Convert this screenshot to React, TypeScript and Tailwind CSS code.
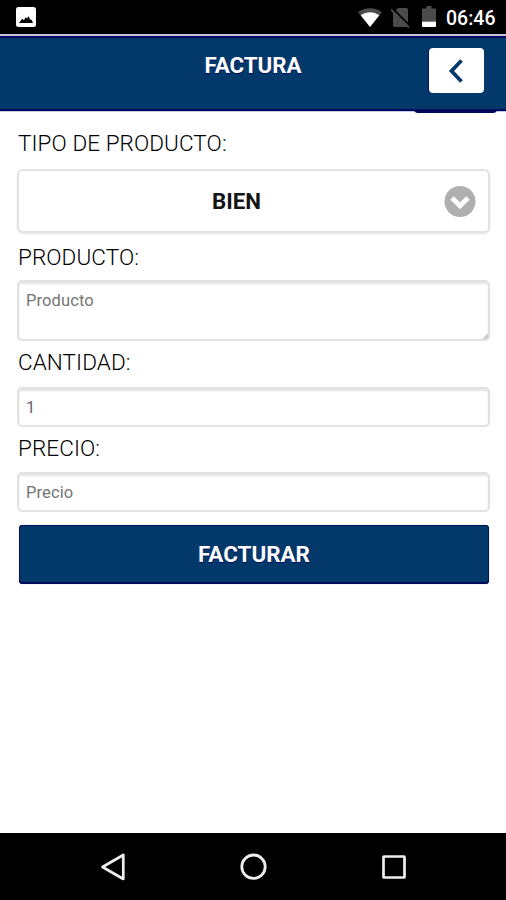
import React, { useState } from "react";

function StatusBar() {
  return (
    <div className="flex h-[34px] shrink-0 items-start justify-between bg-black pl-4 pr-[10px]">
      <svg className="mt-[7px] h-5 w-5" viewBox="0 0 20 20">
        <rect width="20" height="20" rx="2.5" fill="#fff" />
        <path d="M3 16l3.200-4.300 1.800 1.500 1.600-3 1.400 1.200 1.500-2.200 1.700 3.300 1.300.2 1.500 3.300z" fill="#000" />
      </svg>
      <div className="flex flex-row items-start">
        <svg className="mr-[9px] mt-[8px] h-[19px] w-6" viewBox="0 0 24 19">
          <path d="M0 4.2C7-1.2 17-1.2 24 4.2L12 19z" fill="#4b4b4b" />
          <path d="M2.700 7.3c5.800-4.200 12.800-4.200 18.600 0L12 19z" fill="#fff" />
        </svg>
        <svg className="mr-[11px] mt-[8px] h-[20px] w-[20px]" viewBox="0 0 20 20">
          <path d="M7 0h8.5a1.500 1.500 0 0 1 1.500 1.500V17.500a1.500 1.500 0 0 1-1.500 1.500H3.500A1.500 1.500 0 0 1 2 17.500V5z" fill="#4b4b4b" />
          <path d="M1.500 0.500L19 18" stroke="#000" strokeWidth="2" />
          <path d="M0 1.500L18 19.500" stroke="#4b4b4b" strokeWidth="2" />
        </svg>
        <svg className="mr-[10px] mt-[6px] h-[21px] w-[14px]" viewBox="0 0 14 21">
          <path d="M4.500 0h5v2.500H14V15H0V2.500h4.500z" fill="#4b4b4b" />
          <path d="M0 15.500h14v4.500a1 1 0 0 1-1 1H1a1 1 0 0 1-1-1z" fill="#fff" />
        </svg>
        <span className="mt-[7px] w-[50px] whitespace-nowrap text-[19.5px] font-medium leading-6 text-white">
          06:46
        </span>
      </div>
    </div>
  );
}

function Header() {
  return (
    <header className="relative flex h-[78px] shrink-0 justify-center border-b border-t-2 border-b-[#c3c4e6] border-t-[#c9bfd6] bg-[#03386b] shadow-[inset_0_2px_0_#000a5c,inset_0_-2px_0_#000a5c]">
      <h1 className="mt-[17px] text-[22.3px] font-bold leading-6 text-white [text-shadow:0_1px_0_#000a5c]">
        FACTURA
      </h1>
      <button
        aria-label="Volver"
        className="absolute right-[22px] top-[12px] flex h-[45px] w-[55px] items-center justify-center rounded-[4px] bg-white shadow-[-1px_0_0_#00145c]"
      >
        <svg className="mr-[2px] h-6 w-4" viewBox="0 0 16 24" fill="none">
          <path d="M13.500 1.500L3.500 12l10 10.500" stroke="#03386b" strokeWidth="3.800" />
        </svg>
      </button>
      <div className="absolute right-[9px] top-[73px] h-[4px] w-[83px] rounded-b-sm bg-[#000a5c]" />
    </header>
  );
}

function Label({ children }: { children: React.ReactNode }) {
  return (
    <div className="pb-[2px] pl-px text-[22.5px] font-light leading-6 tracking-[0.08px] text-black">
      {children}
    </div>
  );
}

const fieldClass =
  "block w-full resize-none rounded-[5px] border-2 border-[#e2e2e2] bg-white px-[7px] text-[16.5px] tracking-[0.1px] text-[#666] shadow-[inset_0_2px_2px_#e4e4e4] outline-none placeholder:text-[#757575]";

function NavBar() {
  return (
    <div className="flex h-[67px] shrink-0 items-center justify-between bg-black pl-[100px] pr-[100px]">
      <svg className="h-7 w-[25px]" viewBox="0 0 25 28" fill="none">
        <path d="M23.300 2v24L2.500 14z" stroke="#eee" strokeWidth="2.700" strokeLinejoin="round" />
      </svg>
      <svg className="h-7 w-7" viewBox="0 0 28 28" fill="none">
        <circle cx="13.500" cy="13.700" r="11.700" stroke="#eee" strokeWidth="2.800" />
      </svg>
      <svg className="h-6 w-6" viewBox="0 0 24 24" fill="none">
        <rect x="1.500" y="1.500" width="21" height="21" rx="0.500" stroke="#eee" strokeWidth="2.700" />
      </svg>
    </div>
  );
}

export default function App() {
  const [producto, setProducto] = useState("");
  const [cantidad, setCantidad] = useState("1");
  const [precio, setPrecio] = useState("");

  return (
    <div className="flex h-[900px] w-[506px] flex-col overflow-hidden bg-white font-['Roboto',sans-serif]">
      <StatusBar />
      <Header />
      <main className="flex flex-1 flex-col pl-[17px] pr-4 pt-[19px]">
        <Label>TIPO DE PRODUCTO:</Label>
        <button className="mt-[12px] flex h-16 w-full items-center justify-center rounded-[6px] border-2 border-[#e2e2e2] bg-white pl-2 pr-3 text-[22.3px] font-bold text-[#151515] shadow-[0_1px_2px_#e4e4e4]">
          <span className="flex-1 pl-[2px] pt-[2px] text-center">BIEN</span>
          <svg className="h-8 w-8" viewBox="0 0 32 32" fill="none">
            <circle cx="16" cy="16.500" r="15.500" fill="#afafaf" />
            <path d="M8 13l8 7.800 8-7.800" stroke="#fff" strokeWidth="4.800" />
          </svg>
        </button>
        <div className="mt-[12px]">
          <Label>PRODUCTO:</Label>
        </div>
        <div className="relative mt-[9px]">
          <textarea
            className={`${fieldClass} h-[61px] pt-[9px] leading-5`}
            placeholder="Producto"
            value={producto}
            onChange={(e) => setProducto(e.target.value)}
          />
          <svg className="absolute bottom-[2px] right-[2px] h-[6px] w-[6px]" viewBox="0 0 6 6">
            <path d="M6 0v6H0z" fill="#cfcfcf" />
          </svg>
        </div>
        <div className="mt-[9px]">
          <Label>CANTIDAD:</Label>
        </div>
        <input
          className={`${fieldClass} mt-[11px] h-10`}
          value={cantidad}
          onChange={(e) => setCantidad(e.target.value)}
        />
        <div className="mt-[9px]">
          <Label>PRECIO:</Label>
        </div>
        <input
          className={`${fieldClass} mt-[10px] h-10`}
          placeholder="Precio"
          value={precio}
          onChange={(e) => setPrecio(e.target.value)}
        />
        <button className="ml-[2px] mr-px mt-[13px] h-[59px] rounded-[4px] bg-[#03386b] text-[22.4px] font-bold text-white shadow-[inset_0_1px_0_#00125c,inset_0_-2px_0_#000a5c,inset_1px_0_0_#00125c,inset_-1px_0_0_#00125c,0_0_1px_#8890b8] [text-shadow:0_1px_0_#000a5c]">
          FACTURAR
        </button>
      </main>
      <NavBar />
    </div>
  );
}
